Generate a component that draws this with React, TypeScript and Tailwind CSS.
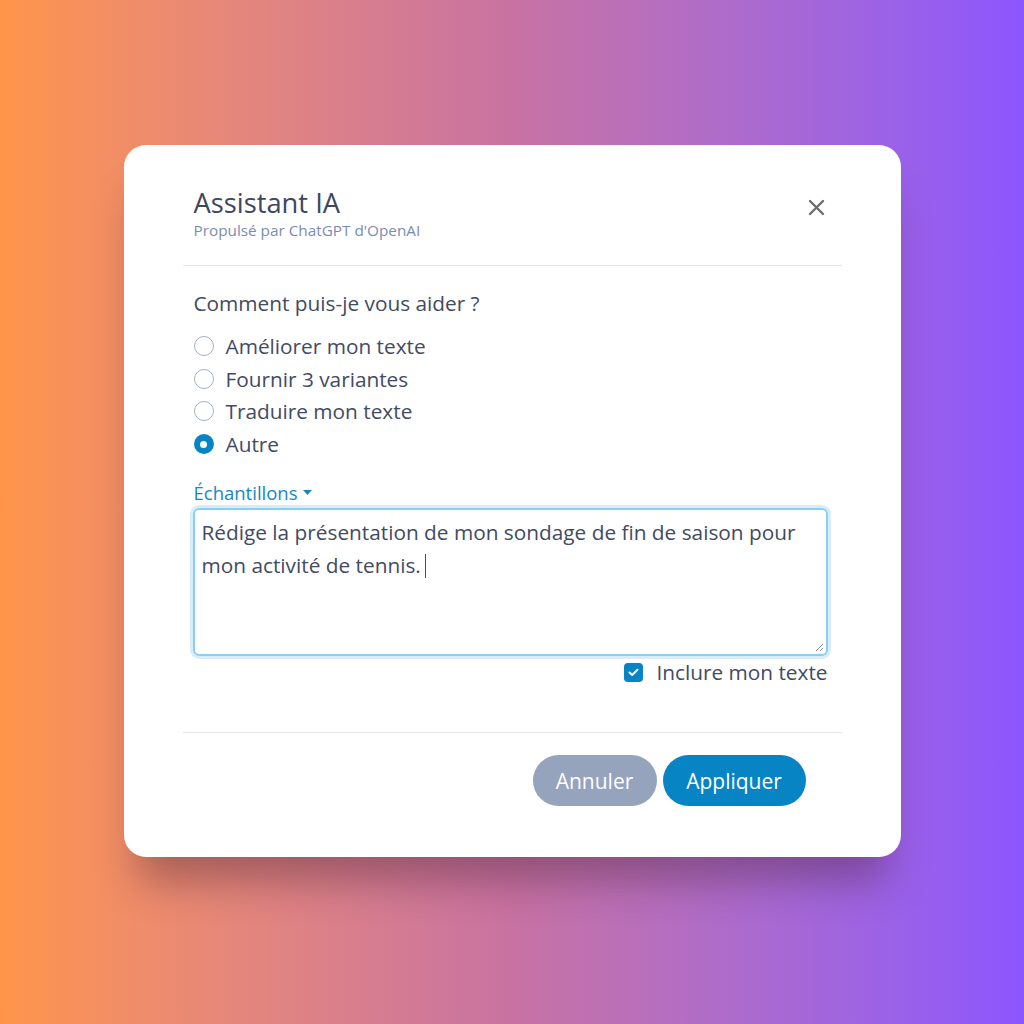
import React from "react";

function Radio({ checked, label }: { checked?: boolean; label: string }) {
  return (
    <div className="flex h-[32.6px] items-center">
      {checked ? (
        <span className="flex h-[20px] w-[20px] items-center justify-center rounded-full bg-[#0784c4]">
          <span className="h-[7px] w-[7px] rounded-full bg-white" />
        </span>
      ) : (
        <span className="h-[20px] w-[20px] rounded-full border-[1.5px] border-[#a3b0c8] bg-white" />
      )}
      <span className="ml-[12px] text-[20.8px] leading-[26px] text-[#414b63]">{label}</span>
    </div>
  );
}

export default function App() {
  return (
    <div
      className="flex min-h-[1024px] w-full justify-center bg-linear-to-r from-[#ff9548] via-[#c872a2] to-[#8d55fe] pt-[145px]"
      style={{ fontFamily: "'Open Sans', 'Noto Sans', sans-serif" }}
    >
      <div className="h-[712px] w-[777px] rounded-[22px] bg-white px-[59px] shadow-[0_38px_40px_-14px_rgba(70,30,50,0.4)]">
        {/* Header */}
        <div className="flex items-start justify-between pl-[11px] pr-[17px] pt-[42px]">
          <div>
            <div className="text-[27.3px] leading-[32px] text-[#3d4760]">Assistant IA</div>
            <div className="mt-[1px] text-[15.3px] leading-[20px] text-[#7a8db0]">
              Propulsé par ChatGPT d'OpenAI
            </div>
          </div>
          <svg className="mt-[12px]" width="17" height="17" viewBox="0 0 17 17">
            <path d="M2 2 L15 15 M15 2 L2 15" stroke="#6e6e6e" strokeWidth="2.4" strokeLinecap="round" />
          </svg>
        </div>
        <div className="mt-[25px] h-px bg-[#e2e5ea]" />

        {/* Body */}
        <div className="pl-[11px] pr-[14px]">
          <div className="mt-[25px] text-[20.8px] leading-[24px] text-[#414b63]">
            Comment puis-je vous aider ?
          </div>
          <div className="mt-[15px] flex flex-col">
            <Radio label="Améliorer mon texte" />
            <Radio label="Fournir 3 variantes" />
            <Radio label="Traduire mon texte" />
            <Radio checked label="Autre" />
          </div>
          <div className="mt-[22px] flex items-center text-[18.5px] leading-[22px] text-[#1488c6]">
            Échantillons
            <svg className="ml-[5px]" width="9" height="6" viewBox="0 0 9 6">
              <path d="M0 0 L9 0 L4.5 5 Z" fill="#1488c6" />
            </svg>
          </div>
          <div className="relative -ml-[1px] mt-[4px] h-[148px] rounded-[6px] border-2 border-[#86cff5] px-[7px] pt-[6px] shadow-[0_0_0_3px_rgba(150,200,235,0.35)]">
            <div className="text-[20.8px] leading-[33px] text-[#414b63]">
              Rédige la présentation de mon sondage de fin de saison pour
              <br />
              mon activité de tennis.
              <span className="ml-[4px] inline-block h-[24px] w-px translate-y-[5px] bg-[#414b63]" />
            </div>
            <svg className="absolute bottom-[2px] right-[2px]" width="10" height="10" viewBox="0 0 10 10">
              <path d="M9 2 L2 9 M9 6 L6 9" stroke="#8a8a8a" strokeWidth="1" />
            </svg>
          </div>
          <div className="mt-[3px] flex items-center justify-end">
            <span className="flex h-[19px] w-[19px] items-center justify-center rounded-[4px] bg-[#0784c4]">
              <svg width="11" height="9" viewBox="0 0 11 9">
                <path d="M1.5 4.5 L4.2 7 L9.5 1.8" stroke="white" strokeWidth="2" fill="none" strokeLinecap="round" strokeLinejoin="round" />
              </svg>
            </span>
            <span className="ml-[13px] text-[20.8px] leading-[26px] text-[#414b63]">Inclure mon texte</span>
          </div>
        </div>

        <div className="mt-[47px] h-px bg-[#e2e5ea]" />

        {/* Footer */}
        <div className="mt-[22px] flex justify-end gap-[6px] pr-[36px]">
          <button className="h-[51px] w-[124px] rounded-full bg-[#95a3bd] text-[21px] leading-[26px] text-white">
            Annuler
          </button>
          <button className="h-[51px] w-[143px] rounded-full bg-[#0784c4] text-[21px] leading-[26px] text-white">
            Appliquer
          </button>
        </div>
      </div>
    </div>
  );
}
